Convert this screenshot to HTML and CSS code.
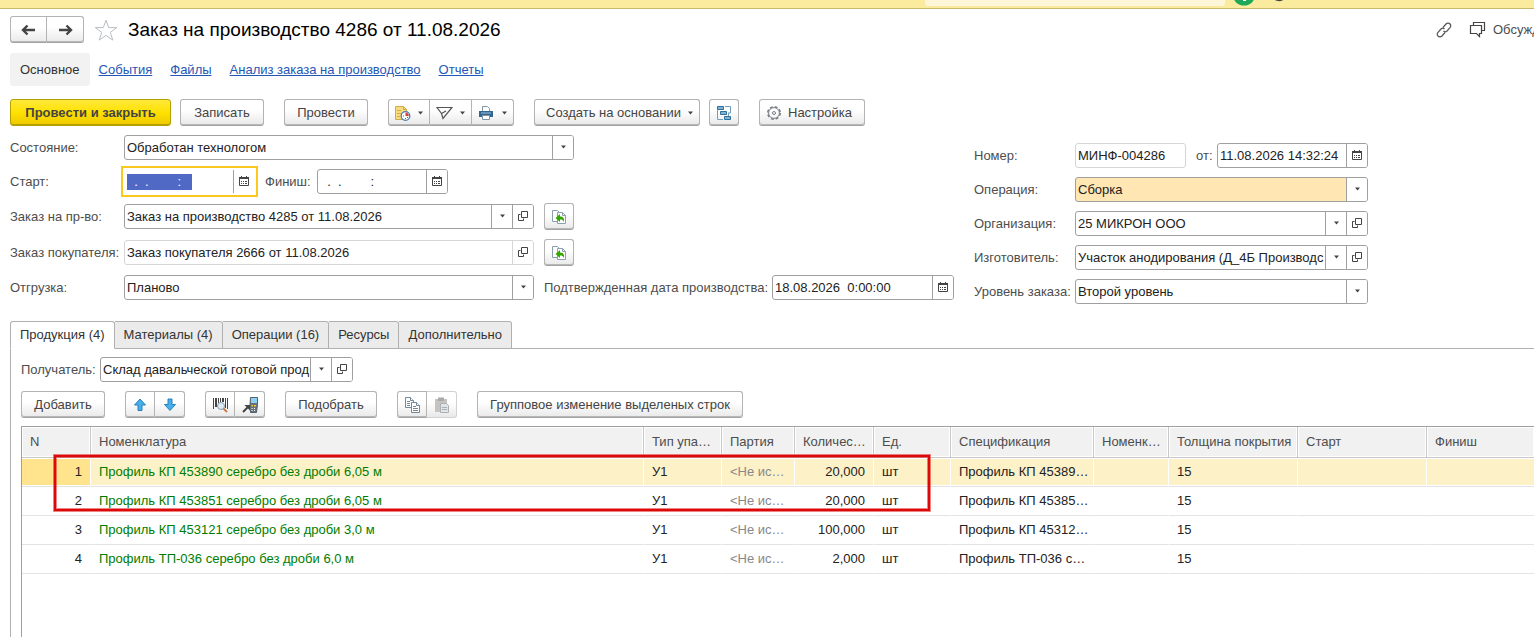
FILE: index.html
```html
<!DOCTYPE html>
<html lang="ru">
<head>
  <meta charset="UTF-8">
  <meta name="viewport" content="width=device-width, initial-scale=1.0">
  <title>Заказ на производство 4286 от 11.08.2026</title>
  <link rel="stylesheet" href="styles.css">
</head>
<body>

<!-- Иконки -->
<svg class="sprite" aria-hidden="true">
  <symbol id="i-down" viewBox="0 0 7 4"><path d="M1 .5h5L3.500 3.500z" fill="#444"/></symbol>
  <symbol id="i-open" viewBox="0 0 10 10"><path d="M3.500.5h6v6h-6zM2.500 3.500h-2v6h5v-2" fill="none" stroke="#444"/></symbol>
  <symbol id="i-cal" viewBox="0 0 10 10"><path d="M.5 2.500h9v7h-9z" fill="#fff" stroke="#444"/><path d="M0 1h10v2H0zM2 0h1v2H2zM7 0h1v2H7zM2 5h1v1H2zM4 5h1v1H4zM6 5h2v1H6zM2 7h1v1H2zM4 7h1v1H4zM6 7h2v1H6z" fill="#444"/></symbol>
  <symbol id="i-fill" viewBox="0 0 16 16"><path d="M6 12.500H1.500v-11h5l2.500 2.500" fill="#fff" stroke="#8ba0ae"/><path d="M6.500 3.500h5l3 3v8h-8z" fill="#fff" stroke="#8ba0ae"/><path d="M11.500 3.500v3h3" fill="none" stroke="#8ba0ae"/><path d="M4.500 9L9 5v2.500c3 0 4.500 1.500 4 5.500C12 11 11 10.500 9 10.500V13z" fill="#35a800"/></symbol>
</svg>

<header class="topbar">
  <div class="topbar-search"></div>
  <svg class="topbar-icons" width="60" height="8" viewBox="0 0 60 8">
    <circle cx="11" cy="-6" r="11.500" fill="#1fa85a"/>
    <path d="M10 0h3v1h-3z" fill="#fff"/>
    <path d="M42 0h8c-1 1.500-6 1.500-8 0z" fill="#444"/>
  </svg>
</header>

<div class="title-row">
  <div class="group">
    <button class="btn btn-nav" aria-label="Назад"><svg width="16" height="12" viewBox="0 0 16 12"><path d="M6.500 1.500L2 6l4.500 4.500M2 6h12" fill="none" stroke="#444" stroke-width="2.400"/></svg></button>
    <button class="btn btn-nav" aria-label="Вперед"><svg width="16" height="12" viewBox="0 0 16 12"><path d="M9.500 1.500L14 6l-4.500 4.500M14 6H2" fill="none" stroke="#444" stroke-width="2.400"/></svg></button>
  </div>
  <svg class="star" width="24" height="22" viewBox="0 0 24 22"><path d="M12 1.200l2.700 7.400h8l-6.400 4.800 2.500 7.700-6.800-4.700-6.800 4.700 2.500-7.700L1.300 8.600h8z" fill="#fff" stroke="#b9bdc2"/></svg>
  <h1>Заказ на производство 4286 от 11.08.2026</h1>
  <div class="title-tools">
    <svg width="16" height="16" viewBox="0 0 16 16"><g fill="none" stroke="#555" stroke-width="1.200"><path d="M7 5.500l3-3.500c1.300-1.300 3-1.200 4 0s1 2.500 0 3.700L11 9c-1 1-2.500 1-3.500 0"/><path d="M9 10.500L6 14c-1.300 1.300-3 1.200-4 0s-1-2.500 0-3.700L5 7c1-1 2.500-1 3.500 0"/></g></svg>
    <svg width="17" height="17" viewBox="0 0 17 17"><path d="M1.500 4.500h11v8h-2v3l-3-3h-6zM4.500 4V1.500h11v8H13" fill="none" stroke="#444" stroke-width="1.200"/></svg>
    <span class="discuss">Обсуждение</span>
  </div>
</div>

<nav class="links">
  <span class="current">Основное</span>
  <a href="#">События</a>
  <a href="#">Файлы</a>
  <a href="#">Анализ заказа на производство</a>
  <a href="#">Отчеты</a>
</nav>

<div class="toolbar">
  <button class="btn btn-main">Провести и закрыть</button>
  <button class="btn wide">Записать</button>
  <button class="btn wide sep">Провести</button>
  <div class="group sep">
    <button class="btn btn-drop" aria-label="Задача">
      <svg width="17" height="16" viewBox="0 0 17 16"><path d="M1.500 1.500h8l3 3v10h-11z" fill="#f7dc82" stroke="#d2ab48"/><path d="M9.500 1.500v3h3M3 5.500h4M3 8.500h4M3 11.500h3" fill="none" stroke="#d2ab48"/><circle cx="11.500" cy="11" r="4.300" fill="#fff" stroke="#4c7caa" stroke-width="1.300"/><path d="M11.500 11V7.500a3.500 3.500 0 0 1 3.300 3.500z" fill="#d6423b"/><path d="M9 11h1M11.500 13v1M14 12.500h-1" stroke="#4c7caa"/></svg>
      <svg width="7" height="4"><use href="#i-down"/></svg>
    </button>
    <button class="btn btn-drop" aria-label="Отправить">
      <svg width="17" height="16" viewBox="0 0 17 16"><path d="M1 2.500h15L7 13.500l-1.500-5zM5.500 8.500L10 6M1 2.500l4.500 6" fill="none" stroke="#555" stroke-width="1.200"/></svg>
      <svg width="7" height="4"><use href="#i-down"/></svg>
    </button>
    <button class="btn btn-drop" aria-label="Печать">
      <svg width="17" height="16" viewBox="0 0 17 16"><path d="M4.500 6V1.500h5l2 2V6" fill="#fff" stroke="#7f94a5"/><path d="M1 6h14v6H1z" fill="#326691"/><path d="M3 8h10" stroke="#9cc0dc"/><path d="M4.500 10.500h7v4h-7z" fill="#fff" stroke="#7f94a5"/></svg>
      <svg width="7" height="4"><use href="#i-down"/></svg>
    </button>
  </div>
  <button class="btn btn-create sep">Создать на основании <svg width="7" height="4"><use href="#i-down"/></svg></button>
  <button class="btn btn-icon" aria-label="Структура подчиненности">
    <svg width="16" height="16" viewBox="0 0 16 16"><g fill="#7fb2d3" stroke="#326f9b"><path d="M1.500 1.500h6v3h-6zM4.500 6.500h6v3h-6zM8.500 11.500h6v3h-6z"/></g><path d="M9 1.500h5.500V8H12M1.500 5v9.500H7M12.500 8v3" fill="none" stroke="#6e9fbe"/></svg>
  </button>
  <button class="btn btn-setup sep"><svg width="16" height="16" viewBox="0 0 16 16"><circle cx="8" cy="8" r="6.300" fill="none" stroke="#777d86" stroke-width="1.400" stroke-dasharray="2.900 2.050"/><circle cx="8" cy="8" r="5.400" fill="none" stroke="#777d86"/><circle cx="8" cy="8" r="1.500" fill="none" stroke="#777d86"/></svg> Настройка</button>
</div>

<form class="form">
  <div class="col-left">
    <div class="row">
      <label for="state">Состояние:</label>
      <div class="field w-450"><select id="state"><option>Обработан технологом</option></select><span class="cell"><svg width="7" height="4"><use href="#i-down"/></svg></span></div>
    </div>
    <div class="row">
      <label for="start">Старт:</label>
      <div class="field focused w-131"><input type="text" id="start" value="  .  .        :   "><button type="button" class="cell" aria-label="Календарь"><svg width="10" height="10"><use href="#i-cal"/></svg></button></div>
      <label for="finish" class="inline">Финиш:</label>
      <div class="field w-131"><input type="text" id="finish" value="  .  .        :   "><button type="button" class="cell" aria-label="Календарь"><svg width="10" height="10"><use href="#i-cal"/></svg></button></div>
    </div>
    <div class="row">
      <label for="order">Заказ на пр-во:</label>
      <div class="field w-410"><select id="order"><option>Заказ на производство 4285 от 11.08.2026</option></select><span class="cell"><svg width="7" height="4"><use href="#i-down"/></svg></span><button type="button" class="cell" aria-label="Открыть"><svg width="10" height="10"><use href="#i-open"/></svg></button></div>
      <button type="button" class="btn btn-icon" aria-label="Заполнить"><svg width="16" height="16"><use href="#i-fill"/></svg></button>
    </div>
    <div class="row">
      <label for="client">Заказ покупателя:</label>
      <div class="field readonly w-410"><input type="text" id="client" value="Заказ покупателя 2666 от 11.08.2026" readonly><button type="button" class="cell" aria-label="Открыть"><svg width="10" height="10"><use href="#i-open"/></svg></button></div>
      <button type="button" class="btn btn-icon" aria-label="Заполнить"><svg width="16" height="16"><use href="#i-fill"/></svg></button>
    </div>
    <div class="row">
      <label for="ship">Отгрузка:</label>
      <div class="field w-410"><select id="ship"><option>Планово</option></select><span class="cell"><svg width="7" height="4"><use href="#i-down"/></svg></span></div>
      <label for="confirmed" class="confirmed">Подтвержденная дата производства:</label>
      <div class="field w-182"><input type="text" id="confirmed" value="18.08.2026  0:00:00"><button type="button" class="cell" aria-label="Календарь"><svg width="10" height="10"><use href="#i-cal"/></svg></button></div>
    </div>
  </div>

  <div class="col-right">
    <div class="row">
      <label for="number">Номер:</label>
      <div class="field readonly w-111"><input type="text" id="number" value="МИНФ-004286" readonly></div>
      <label for="date" class="inline from">от:</label>
      <div class="field grow"><input type="text" id="date" value="11.08.2026 14:32:24"><button type="button" class="cell" aria-label="Календарь"><svg width="10" height="10"><use href="#i-cal"/></svg></button></div>
    </div>
    <div class="row">
      <label for="operation">Операция:</label>
      <div class="field grow marked"><select id="operation"><option>Сборка</option></select><span class="cell"><svg width="7" height="4"><use href="#i-down"/></svg></span></div>
    </div>
    <div class="row">
      <label for="org">Организация:</label>
      <div class="field grow"><select id="org"><option>25 МИКРОН ООО</option></select><span class="cell"><svg width="7" height="4"><use href="#i-down"/></svg></span><button type="button" class="cell" aria-label="Открыть"><svg width="10" height="10"><use href="#i-open"/></svg></button></div>
    </div>
    <div class="row">
      <label for="maker">Изготовитель:</label>
      <div class="field grow"><select id="maker"><option>Участок анодирования (Д_4Б Производс</option></select><span class="cell"><svg width="7" height="4"><use href="#i-down"/></svg></span><button type="button" class="cell" aria-label="Открыть"><svg width="10" height="10"><use href="#i-open"/></svg></button></div>
    </div>
    <div class="row">
      <label for="level">Уровень заказа:</label>
      <div class="field grow"><select id="level"><option>Второй уровень</option></select><span class="cell"><svg width="7" height="4"><use href="#i-down"/></svg></span></div>
    </div>
  </div>
</form>

<div class="tabs">
  <button class="tab active">Продукция (4)</button>
  <button class="tab">Материалы (4)</button>
  <button class="tab">Операции (16)</button>
  <button class="tab">Ресурсы</button>
  <button class="tab">Дополнительно</button>
</div>

<main class="panel">
  <div class="row">
    <label for="receiver" class="receiver">Получатель:</label>
    <div class="field w-253"><select id="receiver"><option>Склад давальческой готовой прод</option></select><span class="cell"><svg width="7" height="4"><use href="#i-down"/></svg></span><button type="button" class="cell" aria-label="Открыть"><svg width="10" height="10"><use href="#i-open"/></svg></button></div>
  </div>

  <div class="toolbar table-tools">
    <button class="btn wide">Добавить</button>
    <div class="group sep">
      <button class="btn btn-icon" aria-label="Вверх"><svg width="16" height="16" viewBox="0 0 16 16"><path d="M8 2l5.500 6H10v5.500H6V8H2.500z" fill="#45b0ee" stroke="#2a7fb5"/></svg></button>
      <button class="btn btn-icon" aria-label="Вниз"><svg width="16" height="16" viewBox="0 0 16 16"><path d="M8 13.500L2.500 7.500H6V2h4v5.500h3.500z" fill="#45b0ee" stroke="#2a7fb5"/></svg></button>
    </div>
    <div class="group sep">
      <button class="btn btn-icon" aria-label="Поиск по штрихкоду"><svg width="16" height="16" viewBox="0 0 16 16"><path d="M1 1h1v11H1zM3 1h2v9H3zM6 1h1v5H6zM8 1h1v4H8zM10 1h2v4h-2zM13 1h1v10h-1zM15 1h1v11h-1z" fill="#444"/><circle cx="9" cy="9" r="3.500" fill="#dcebf5" stroke="#8c9aa5"/><path d="M11.500 11.500L15 15" stroke="#c77c4b" stroke-width="2"/></svg></button>
      <button class="btn btn-icon" aria-label="Терминал сбора данных"><svg width="16" height="16" viewBox="0 0 16 16"><path d="M8.500.5h7v7l-1 8h-6l-.5-8z" fill="#66737c" stroke="#55616a"/><path d="M9 1h6v5H9z" fill="#8ed0f5"/><path d="M9.500 8h1.500v1.500H9.500zM12 8h2v1.500h-2z" fill="#f2c53d"/><path d="M9.500 11h1v1h-1zM12 11h1v1h-1zM9.500 13h1v1h-1zM12 13h1v1h-1z" fill="#fff"/><path d="M1 15l5-5" stroke="#444" stroke-width="2"/><path d="M2.500 8H8v5.500z" fill="#444"/></svg></button>
    </div>
    <button class="btn pick sep">Подобрать</button>
    <div class="group sep">
      <button class="btn btn-icon" aria-label="Копировать"><svg width="16" height="16" viewBox="0 0 16 16"><g fill="#fff" stroke="#71899b"><path d="M1.500.5h5l3 3v7h-8z"/><path d="M6.500.5v3h3M3 4.500h3M3 6.500h3M3 8.500h3"/><path d="M7.500 5.500h5l3 3v7h-8z"/><path d="M12.500 5.500v3h3M9 9.500h3M9 11.500h5M9 13.500h5"/></g></svg></button>
      <button class="btn btn-icon" aria-label="Вставить" disabled><svg width="16" height="16" viewBox="0 0 16 16"><path d="M1 2h12v13H1z" fill="#c9c3bf"/><path d="M4 .5h6V4H4z" fill="#a9a9a9"/><path d="M6.500 6.500h6l2 2v7h-8z" fill="#e2e5e8" stroke="#a9b0b6"/><path d="M8 10.500h5M8 12.500h5" stroke="#a9b0b6"/></svg></button>
    </div>
    <button class="btn mass sep">Групповое изменение выделеных строк</button>
  </div>

  <div class="table-wrap">
    <table>
      <colgroup>
        <col class="c-n"><col><col class="c-pack"><col class="c-lot"><col class="c-qty"><col class="c-unit"><col class="c-spec"><col class="c-nom"><col class="c-date"><col class="c-date"><col class="c-end">
      </colgroup>
      <thead>
        <tr><th>N</th><th>Номенклатура</th><th>Тип упа…</th><th>Партия</th><th>Количес…</th><th>Ед.</th><th>Спецификация</th><th>Номенк…</th><th>Толщина покрытия</th><th>Старт</th><th>Финиш</th></tr>
      </thead>
      <tbody>
        <tr class="selected"><td class="num">1</td><td class="name">Профиль КП 453890 серебро без дроби 6,05 м</td><td>У1</td><td class="lot">&lt;Не ис…</td><td class="num">20,000</td><td>шт</td><td>Профиль КП 45389…</td><td></td><td>15</td><td></td><td></td></tr>
        <tr><td class="num">2</td><td class="name">Профиль КП 453851 серебро без дроби 6,05 м</td><td>У1</td><td class="lot">&lt;Не ис…</td><td class="num">20,000</td><td>шт</td><td>Профиль КП 45385…</td><td></td><td>15</td><td></td><td></td></tr>
        <tr><td class="num">3</td><td class="name">Профиль КП 453121 серебро без дроби 3,0 м</td><td>У1</td><td class="lot">&lt;Не ис…</td><td class="num">100,000</td><td>шт</td><td>Профиль КП 45312…</td><td></td><td>15</td><td></td><td></td></tr>
        <tr><td class="num">4</td><td class="name">Профиль ТП-036 серебро без дроби 6,0 м</td><td>У1</td><td class="lot">&lt;Не ис…</td><td class="num">2,000</td><td>шт</td><td>Профиль ТП-036 с…</td><td></td><td>15</td><td></td><td></td></tr>
      </tbody>
    </table>
    <!-- рамка вокруг первых двух строк -->
    <div class="red-frame"></div>
  </div>
</main>

<script>
  // Курсор сразу в поле "Старт"
  document.getElementById("start").select();
</script>
</body>
</html>
```
FILE: styles.css
```css
* {
  box-sizing: border-box;
}
html {
  height: 100%;
}
body {
  margin: 0;
  height: 100%;
  display: flex;
  flex-direction: column;
  overflow: hidden;
  background: #fff;
  color: #4d4d4d;
  font-family: "Liberation Sans", Arial, sans-serif;
  font-size: 13px;
  line-height: 16px;
}
button, input, select {
  font: inherit;
  color: inherit;
  margin: 0;
}
svg {
  display: block;
  flex: none;
}
.sprite {
  position: absolute;
  width: 0;
  height: 0;
}

/* верхняя полоса */
.topbar {
  display: flex;
  justify-content: flex-end;
  flex: none;
  height: 9px;
  background: #fbeb9e;
  border-bottom: 1px solid #c9b96a;
}
.topbar-search {
  width: 300px;
  height: 6px;
  background: #fdf6d8;
  border-radius: 0 0 3px 3px;
}
.topbar-icons {
  margin: 0 241px 0 8px;
}

/* заголовок */
.title-row {
  display: flex;
  align-items: center;
  flex: none;
  height: 27px;
  margin: 7px 0 10px 10px;
}
.star {
  margin: 0 10px;
}
h1 {
  margin: 0;
  color: #000;
  font-size: 19px;
  font-weight: normal;
  line-height: 24px;
}
.title-tools {
  display: flex;
  align-items: center;
  width: 98px;
  margin-left: auto;
  overflow: hidden;
}
.title-tools svg {
  margin-right: 17px;
}
.title-tools svg + svg {
  margin-right: 7px;
}

.links {
  display: flex;
  align-items: center;
  gap: 18px;
  flex: none;
  height: 33px;
  margin: 0 10px 13px;
}
.links .current {
  margin-right: -9px;
  padding: 9px 10px 8px;
  background: #f2f2f2;
  border-radius: 3px;
  color: #333;
}
.links a {
  color: #2457b5;
}

/* кнопки */
.toolbar {
  display: flex;
  align-items: center;
  gap: 9px;
  flex: none;
  margin: 0 10px 9px;
}
.toolbar .sep {
  margin-left: 11px;
}
.group {
  display: flex;
}
.btn {
  display: flex;
  align-items: center;
  justify-content: center;
  flex: none;
  height: 27px;
  padding: 0;
  background: linear-gradient(#fff 40%, #e9e9e9);
  border: 1px solid #b3b3b3;
  border-bottom-color: #a3a3a3;
  border-radius: 3px;
  box-shadow: inset 0 -1px #b8b8b8;
  color: #444;
  white-space: nowrap;
}
.group .btn + .btn {
  border-left: 0;
  border-radius: 0 3px 3px 0;
}
.group .btn:first-child {
  border-radius: 3px 0 0 3px;
}
.group .btn + .btn:not(:last-child) {
  border-radius: 0;
}
.group .btn:disabled {
  border-color: #d2d2d2;
  box-shadow: none;
}
.btn-nav {
  width: 37px;
}
.btn-icon {
  width: 30px;
}
.btn-drop {
  width: 42px;
  gap: 6px;
}
.btn.wide {
  width: 84px;
}
.btn.pick {
  width: 92px;
}
.btn.mass {
  width: 266px;
}
.btn-main {
  width: 161px;
  background: linear-gradient(#ffe93b, #ffe100 50%, #ecc900);
  border-color: #b5a000;
  box-shadow: inset 0 -1px #b5a000;
  font-weight: bold;
}
.btn-create {
  width: 166px;
  gap: 6px;
  padding-left: 6px;
}
.btn-setup {
  width: 106px;
  gap: 6px;
  padding-right: 6px;
}

/* форма */
.form {
  display: flex;
  gap: 20px;
  flex: none;
  margin: 0 10px 17px;
}
.col-left, .col-right {
  display: flex;
  flex-direction: column;
  gap: 9px;
  flex: none;
}
.col-left {
  width: 944px;
}
.col-right {
  width: 394px;
  padding-top: 8px;
}
.row {
  display: flex;
  align-items: center;
}
.col-left .row > label:first-child {
  width: 114px;
}
.col-right .row > label:first-child {
  width: 101px;
}
.row label {
  flex: none;
  white-space: nowrap;
}
.row .inline {
  width: 52px;
  margin-left: 10px;
}
.row .from {
  width: 21px;
}
.row .confirmed {
  width: 228px;
  margin-left: 10px;
}
.row .receiver {
  width: 79px;
}
.row .btn {
  margin-left: 10px;
}
.field {
  display: flex;
  height: 25px;
  background: #fff;
  border: 1px solid #a0a0a0;
  border-radius: 3px;
  color: #222;
}
.field input, .field select {
  flex: 1;
  min-width: 0;
  padding: 0 0 0 2px;
  background: none;
  border: 0;
  outline: 0;
  appearance: none;
  white-space: pre;
}
.cell {
  display: flex;
  align-items: center;
  justify-content: center;
  flex: none;
  width: 21px;
  padding: 0 0 2px;
  background: #fff;
  border: 0;
  border-left: 1px solid #a0a0a0;
  border-radius: 0 2px 2px 0;
}
.readonly, .readonly .cell {
  border-color: #d6d6d6;
}
.marked {
  background: #ffe6b3;
}
.focused {
  outline: 2px solid #fbc91e;
  outline-offset: 1px;
  border-color: #fff;
  border-radius: 0;
}
.focused ::selection {
  background: #5069c4;
  color: #fff;
}
.grow {
  flex: 1;
  min-width: 0;
}
.w-111 { width: 111px; }
.w-131 { width: 131px; }
.w-182 { width: 182px; }
.w-253 { width: 253px; }
.w-410 { width: 410px; }
.w-450 { width: 450px; }

/* закладки */
.tabs {
  display: flex;
  flex: none;
  margin-left: 10px;
  border-bottom: 1px solid #b0b0b0;
}
.tab {
  height: 28px;
  margin-bottom: -1px;
  padding: 0 9px;
  background: #ebebeb;
  border: 1px solid #b0b0b0;
  border-left: 0;
  border-radius: 0 3px 0 0;
  color: #333;
}
.tab.active {
  background: #fff;
  border-left: 1px solid #b0b0b0;
  border-bottom-color: #fff;
  border-radius: 3px 3px 0 0;
}
.panel {
  display: flex;
  flex-direction: column;
  flex: 1;
  min-height: 0;
  margin-left: 10px;
  padding: 8px 0 0 10px;
  border-left: 1px solid #b0b0b0;
}
.table-tools {
  margin: 9px 0 8px;
}

/* таблица */
.table-wrap {
  position: relative;
  flex: 1;
  border-top: 1px solid #a0a0a0;
  border-left: 1px solid #a0a0a0;
}
table {
  width: 100%;
  table-layout: fixed;
  border-collapse: separate;
  border-spacing: 0;
}
th, td {
  padding: 0 3px 0 8px;
  overflow: hidden;
  text-align: left;
  text-overflow: ellipsis;
  white-space: nowrap;
  font-weight: normal;
}
th {
  height: 31px;
  background: #f1f1f1;
  border-right: 1px solid #c8c8c8;
  border-bottom: 1px solid #c8c8c8;
  box-shadow: inset 0 0 0 1px #fff;
}
td {
  height: 29px;
  border-right: 1px solid #fff;
  border-bottom: 1px solid #e3e3e3;
  color: #222;
}
th:last-child, td:last-child {
  border-right: 0;
}
.selected td {
  background: #fdf1c8;
  box-shadow: inset 0 1px #fff, inset 0 -1px #fff;
}
.selected td:first-child {
  background: #ffe48d;
}
td.num {
  padding: 0 8px 0 0;
  text-align: right;
}
td.name {
  color: #007d00;
}
td.lot {
  color: #888;
}
.c-n { width: 69px; }
.c-pack { width: 78px; }
.c-lot { width: 73px; }
.c-qty { width: 79px; }
.c-unit { width: 77px; }
.c-spec { width: 143px; }
.c-nom { width: 75px; }
.c-date { width: 129px; }
.c-end { width: 107px; }
.red-frame {
  position: absolute;
  top: 28px;
  right: 604px;
  left: 32px;
  height: 56px;
  border: 2px solid #dd0808;
  box-shadow: 0 0 0 1px rgba(221, 8, 8, 0.5), inset 0 0 0 1px rgba(221, 8, 8, 0.5);
}
```
